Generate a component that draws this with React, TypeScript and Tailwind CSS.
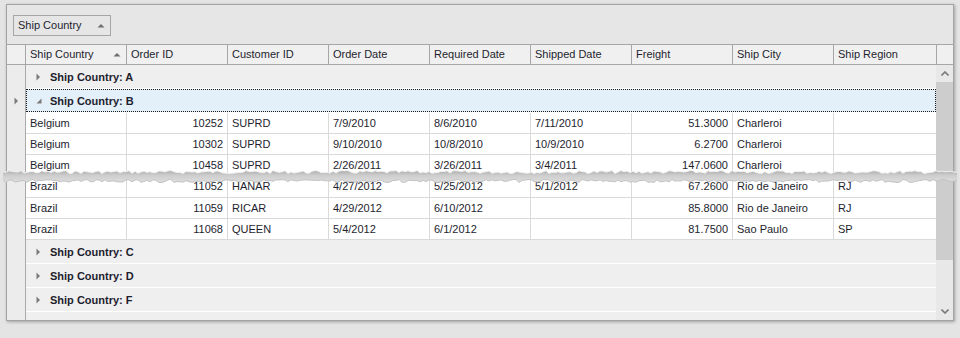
import React from 'react'

type Col = { title: string; w: number; right?: boolean; sort?: boolean }

const cols: Col[] = [
  { title: 'Ship Country', w: 101, sort: true },
  { title: 'Order ID', w: 101, right: true },
  { title: 'Customer ID', w: 101 },
  { title: 'Order Date', w: 101 },
  { title: 'Required Date', w: 101 },
  { title: 'Shipped Date', w: 101 },
  { title: 'Freight', w: 101, right: true },
  { title: 'Ship City', w: 101 },
  { title: 'Ship Region', w: 102 },
]

const belgium = [
  ['Belgium', '10252', 'SUPRD', '7/9/2010', '8/6/2010', '7/11/2010', '51.3000', 'Charleroi', ''],
  ['Belgium', '10302', 'SUPRD', '9/10/2010', '10/8/2010', '10/9/2010', '6.2700', 'Charleroi', ''],
  ['Belgium', '10458', 'SUPRD', '2/26/2011', '3/26/2011', '3/4/2011', '147.0600', 'Charleroi', ''],
]

const brazil = [
  ['Brazil', '11052', 'HANAR', '4/27/2012', '5/25/2012', '5/1/2012', '67.2600', 'Rio de Janeiro', 'RJ'],
  ['Brazil', '11059', 'RICAR', '4/29/2012', '6/10/2012', '', '85.8000', 'Rio de Janeiro', 'RJ'],
  ['Brazil', '11068', 'QUEEN', '5/4/2012', '6/1/2012', '', '81.7500', 'Sao Paulo', 'SP'],
]

const SortUp = ({ className = '' }: { className?: string }) => (
  <svg width="8" height="5" viewBox="0 0 8 5" className={className}>
    <path d="M0.5 4.5 L4 1 L7.5 4.5 Z" fill="#6e6e6e" />
  </svg>
)

const Collapsed = () => (
  <svg width="5" height="8" viewBox="0 0 5 8">
    <path d="M0.5 0.5 L4 4 L0.5 7.5 Z" fill="#7a7a7a" />
  </svg>
)

const Expanded = () => (
  <svg width="6" height="6" viewBox="0 0 6 6">
    <path d="M5.5 0.5 L5.5 5.5 L0.5 5.5 Z" fill="#7a7a7a" />
  </svg>
)

const Indicator = ({ children }: { children?: React.ReactNode }) => (
  <div className="w-[19px] shrink-0 border-r border-[#a9a9a9] bg-[#ececec] flex items-center justify-center">
    {children}
  </div>
)

const GroupRow = ({ label }: { label: string }) => (
  <div className="flex h-[24px]">
    <Indicator />
    <div className="w-[910px] border-b border-white bg-[#efefef] flex items-center pl-[10px] pt-px">
      <Collapsed />
      <span className="ml-[9px] font-bold text-[#1e1e2e]">{label}</span>
    </div>
  </div>
)

const DataRow = ({ row, tall }: { row: string[]; tall?: boolean }) => (
  <div className={tall ? 'flex h-[22px]' : 'flex h-[21px]'}>
    <Indicator />
    {row.map((v, i) => (
      <div
        key={i}
        style={{ width: cols[i].w }}
        className={
          (i < 8 ? 'border-r ' : '') +
          'shrink-0 bg-white border-b border-[#dadada] flex items-center px-[4px] text-[#1e1e2e] ' +
          (cols[i].right ? 'justify-end' : '')
        }
      >
        {v}
      </div>
    ))}
  </div>
)

// jagged paper tear drawn over the middle rows
const Tear = () => {
  let seed = 7
  const rnd = () => {
    seed = (seed * 9301 + 49297) % 233280
    return seed / 233280
  }
  const w = 954
  const top: string[] = []
  const bot: string[] = []
  for (let x = 0; x <= w; x += 3) {
    top.push(`${x},${(2.5 + rnd() * 3).toFixed(1)}`)
  }
  for (let x = w; x >= 0; x -= 3) {
    bot.push(`${x},${(11.5 + rnd() * 3).toFixed(1)}`)
  }
  return (
    <svg width={w} height="18" viewBox={`0 0 ${w} 18`} className="absolute left-[3px] top-[168px]">
      <defs>
        <linearGradient id="tg" x1="0" y1="0" x2="0" y2="1">
          <stop offset="0" stopColor="#acacac" />
          <stop offset="0.4" stopColor="#cdcdcd" />
          <stop offset="1" stopColor="#dedede" />
        </linearGradient>
      </defs>
      <polygon points={[...top, ...bot].join(' ')} fill="url(#tg)" />
      <polyline points={top.join(' ')} fill="none" stroke="#f2f2f2" strokeWidth="1" />
      <polyline points={bot.join(' ')} fill="none" stroke="#c2c2c2" strokeWidth="1" />
    </svg>
  )
}

export default function App() {
  return (
    <div className="relative w-[960px] h-[338px] bg-[#e4e4e4] pt-[4px] pl-[6px] font-['Liberation_Sans',Arial,sans-serif] text-[11px] leading-none">
      <div className="w-[948px] h-[317px] border border-[#a3a3a3] bg-[#e6e6e6] shadow-[1px_1px_3px_rgba(0,0,0,0.3)] flex flex-col overflow-hidden">
        {/* group panel */}
        <div className="h-[39px] shrink-0 pl-[6px] pt-[10px]">
          <div className="w-[98px] h-[21px] border border-[#a6a6a6] flex items-center pl-[4px] pr-[5px] text-[#1e1e2e]">
            <span>Ship Country</span>
            <SortUp className="ml-auto" />
          </div>
        </div>

        {/* header */}
        <div className="flex h-[21px] shrink-0 border-y border-[#a6a6a6] bg-[#f0f0f0] text-[#1e1e2e]">
          <div className="w-[19px] shrink-0 border-r border-[#a6a6a6]" />
          {cols.map((c, i) => (
            <div
              key={c.title}
              style={{ width: i === 8 ? 103 : c.w }}
              className="shrink-0 border-r border-[#a6a6a6] flex items-center pl-[4px] pr-[5px]"
            >
              <span>{c.title}</span>
              {c.sort && <SortUp className="ml-auto" />}
            </div>
          ))}
          <div className="flex-1" />
        </div>

        {/* body */}
        <div className="flex flex-1 min-h-0">
          <div className="w-[929px] overflow-hidden">
            <GroupRow label="Ship Country: A" />
            <div className="flex h-[24px]">
              <Indicator>
                <Collapsed />
              </Indicator>
              <div className="w-[910px] border-b border-white">
                <div className="h-[23px] border border-dotted border-[#1a1a1a] bg-[#e4f0f9] flex items-center pl-[9px] pt-px">
                  <Expanded />
                  <span className="ml-[8px] font-bold text-[#1e1e2e]">Ship Country: B</span>
                </div>
              </div>
            </div>
            {belgium.map((r) => (
              <DataRow key={r[1]} row={r} />
            ))}
            {brazil.map((r, i) => (
              <DataRow key={r[1]} row={r} tall={i === 0} />
            ))}
            <GroupRow label="Ship Country: C" />
            <GroupRow label="Ship Country: D" />
            <GroupRow label="Ship Country: F" />
            <div className="flex h-[24px]">
              <Indicator />
              <div className="w-[910px] bg-[#efefef]" />
            </div>
          </div>

          {/* scrollbar */}
          <div className="w-[17px] bg-[#e8e8e8] flex flex-col items-center">
            <div className="h-[17px] w-full flex items-center justify-center">
              <svg width="8" height="5" viewBox="0 0 8 5">
                <path d="M0.5 4.5 L4 1 L7.5 4.5" fill="none" stroke="#7a7a7a" strokeWidth="1.6" />
              </svg>
            </div>
            <div className="w-full h-[178px] bg-[#cdcdcd]" />
            <div className="flex-1" />
            <div className="h-[17px] w-full flex items-center justify-center">
              <svg width="8" height="5" viewBox="0 0 8 5">
                <path d="M0.5 0.5 L4 4 L7.5 0.5" fill="none" stroke="#7a7a7a" strokeWidth="1.6" />
              </svg>
            </div>
          </div>
        </div>
      </div>
      <Tear />
    </div>
  )
}
